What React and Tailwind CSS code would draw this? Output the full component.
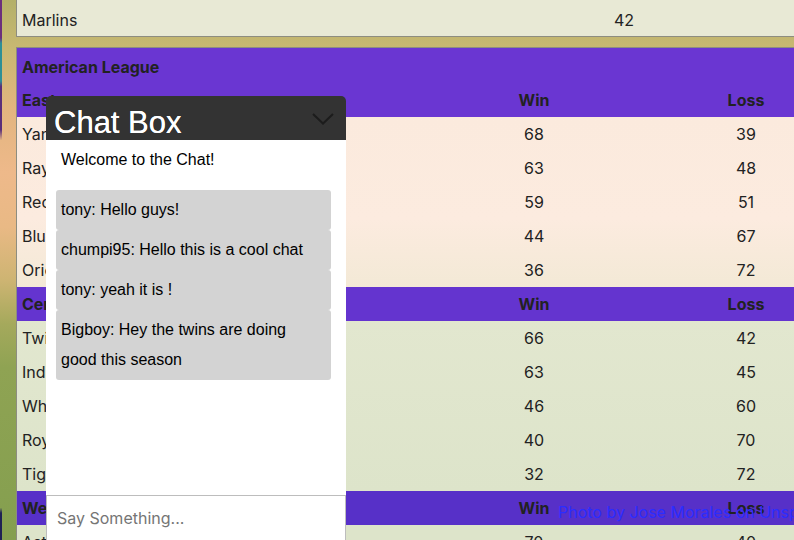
import React from 'react'

const east = [
  ['Yankees', 68, 39],
  ['Rays', 63, 48],
  ['Red Sox', 59, 51],
  ['Blue Jays', 44, 67],
  ['Orioles', 36, 72],
]

const central = [
  ['Twins', 66, 42],
  ['Indians', 63, 45],
  ['White Sox', 46, 60],
  ['Royals', 40, 70],
  ['Tigers', 32, 72],
]

const messages = [
  'tony: Hello guys!',
  'chumpi95: Hello this is a cool chat',
  'tony: yeah it is !',
  'Bigboy: Hey the twins are doing good this season',
]

const HeaderRow = ({ label, bg }) => (
  <div className={`grid grid-cols-[411px_212px_212px] h-[34px] items-center font-bold ${bg}`}>
    <span className="pl-[5px]">{label}</span>
    <span className="text-center">Win</span>
    <span className="text-center">Loss</span>
  </div>
)

const TeamRow = ({ team, bg }) => (
  <div className={`grid grid-cols-[411px_212px_212px] h-[34px] items-center ${bg}`}>
    <span className="pl-[5px]">{team[0]}</span>
    <span className="text-center">{team[1]}</span>
    <span className="text-center">{team[2]}</span>
  </div>
)

const ChatBox = () => (
  <div className="absolute left-[46px] top-[96px] w-[300px] h-[460px] flex flex-col font-['Liberation_Sans',Arial,sans-serif]">
    <div className="h-[44px] shrink-0 bg-[#333333] rounded-t-[5px] flex items-start justify-between pl-[8px] pr-[12px] overflow-hidden">
      <span className="text-white text-[31px] leading-[36px] pt-[9px] [text-shadow:0_0_0.4px_#fff]">Chat Box</span>
      <svg width="22" height="12" viewBox="0 0 22 12" className="mt-[17px]">
        <path d="M1 1 L11 10.5 L21 1" fill="none" stroke="#1c1c1c" strokeWidth="2" />
      </svg>
    </div>
    <div className="flex-1 bg-white pt-[11px] pl-[10px] pr-[15px] text-black text-[16px]">
      <p className="px-[5px] leading-[18px]">Welcome to the Chat!</p>
      <div className="mt-[21px] flex flex-col">
        {messages.map((m, i) => (
          <div key={i} className="bg-[#d3d3d3] rounded-[3px] px-[5px] py-[5px] leading-[30px]">
            {m}
          </div>
        ))}
      </div>
    </div>
    <div className="h-[61px] shrink-0 bg-white border border-[#bdbdbd] px-[10px] pt-[10px] font-['Inter',sans-serif] text-[16px] text-[#757575]">
      Say Something...
    </div>
  </div>
)

export default function App() {
  return (
    <div className="relative w-[794px] h-[540px] overflow-hidden flex bg-[linear-gradient(180deg,#b3b068_0%,#c8b872_9%,#e2b57f_20%,#eeb98a_32%,#e9b985_42%,#cdb472_52%,#a5a95c_60%,#8fa353_68%,#849f4f_100%)] font-['Inter','Roboto',sans-serif] text-[16px] text-[#222222]">
      <div className="w-[2px] shrink-0 bg-[linear-gradient(180deg,#6b2f7c_0%,#6b2f7c_7%,#2d8f96_8%,#2d8f96_15%,#5a2e7a_16%,#5a2e7a_24%,transparent_26%,transparent_94%,#1f2154_95%)]" />
      <div className="w-[14px] shrink-0" />
      <div className="flex flex-col gap-[10px] w-[852px] shrink-0">
        <div className="border-l border-b border-[#8d8d80] bg-[#e8e9d5]">
          <div className="grid grid-cols-[482px_250px_250px] h-[36px] items-center pt-[4px]">
            <span className="pl-[5px]">Marlins</span>
            <span className="text-center">42</span>
            <span className="text-center">41</span>
          </div>
        </div>
        <div className="border-l border-t border-[#8d8d80]">
          <div className="bg-[#6a36d2]">
            <div className="h-[35px] flex items-center pl-[5px] pt-[3px] font-bold">American League</div>
            <HeaderRow label="East" bg="" />
          </div>
          <div className="bg-[linear-gradient(180deg,#fbeadd,#fcebdf_60%,#f3e9d6)]">
            {east.map((t) => (
              <TeamRow key={t[0]} team={t} bg="" />
            ))}
          </div>
          <HeaderRow label="Central" bg="bg-[#6434cf]" />
          <div className="bg-[linear-gradient(180deg,#e2e7cf,#dde4ca)]">
            {central.map((t) => (
              <TeamRow key={t[0]} team={t} bg="" />
            ))}
          </div>
          <HeaderRow label="West" bg="bg-[#5730c8]" />
          <TeamRow team={['Astros', 70, 40]} bg="bg-[#dde4ca]" />
        </div>
      </div>
      <span className="absolute left-[558px] top-[500px] whitespace-nowrap text-[#2b2cff]">
        Photo by Jose Morales on Unsplash
      </span>
      <ChatBox />
    </div>
  )
}
